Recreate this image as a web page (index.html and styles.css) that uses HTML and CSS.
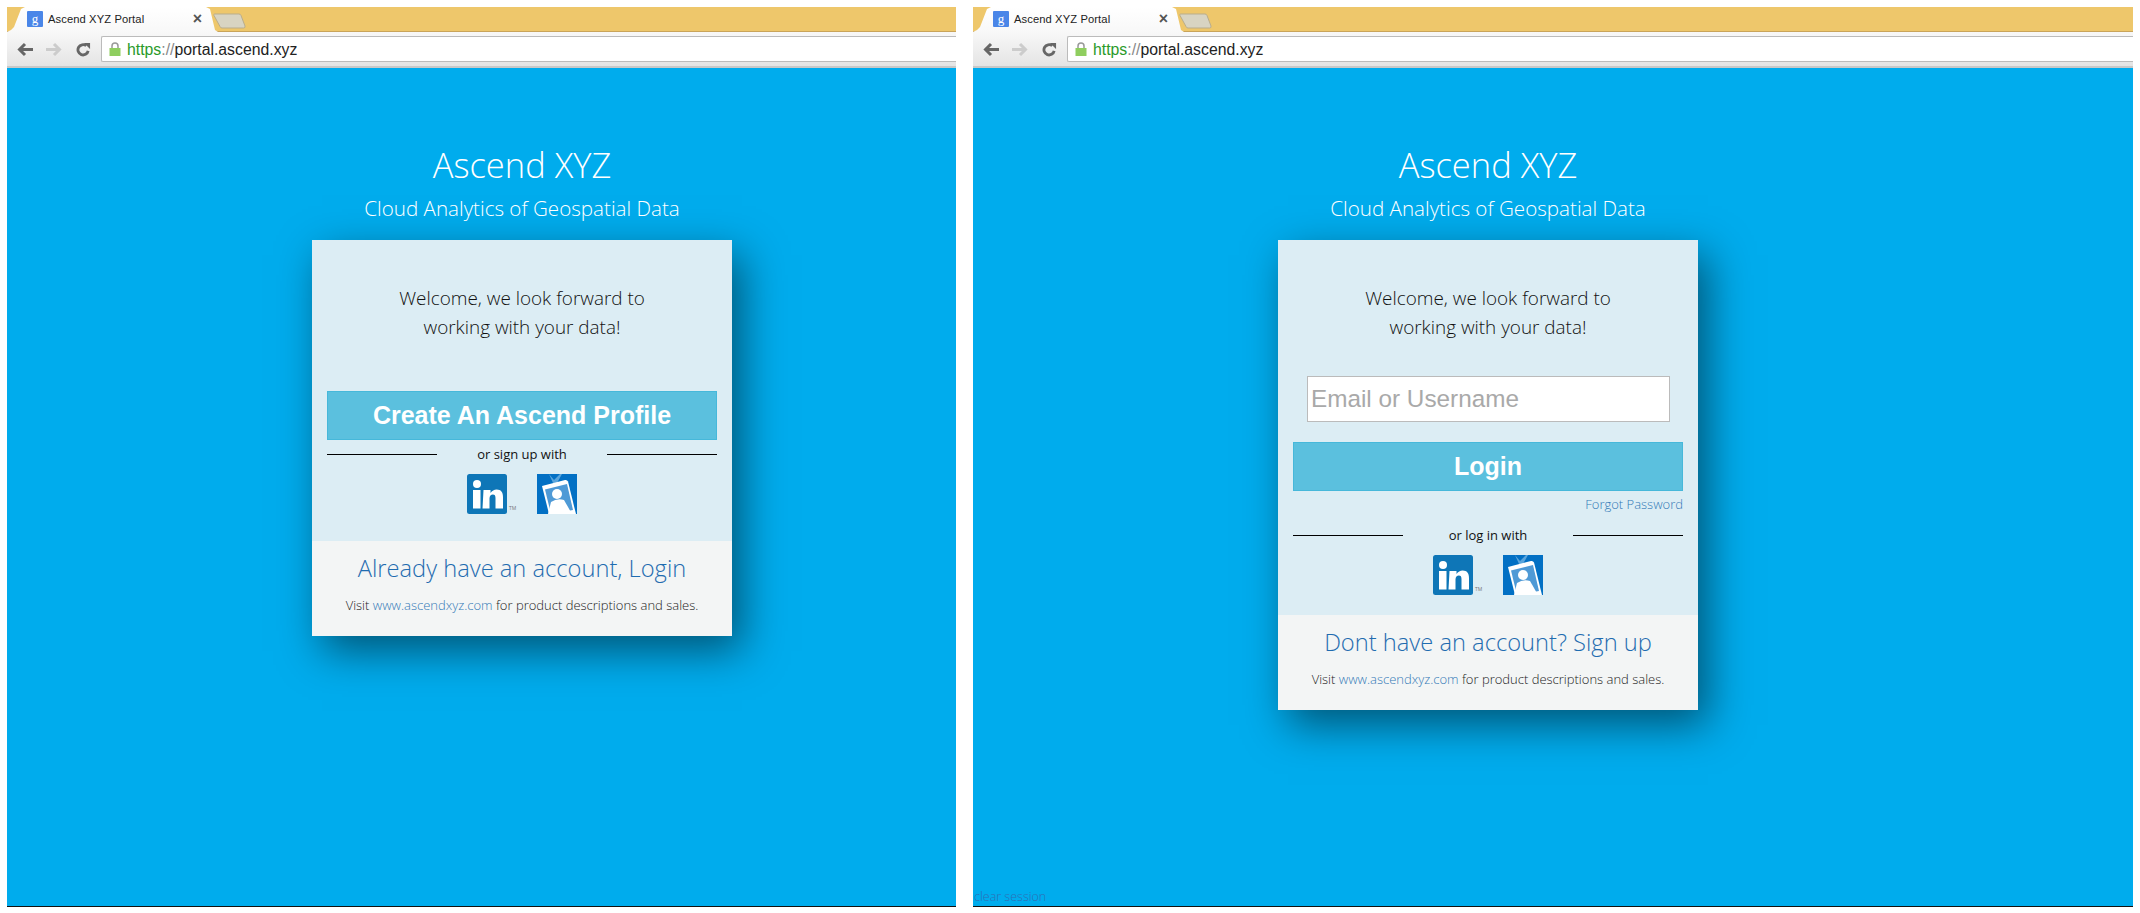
FILE: index.html
```html
<!DOCTYPE html>
<html>
<head>
  <meta charset="utf-8">
  <title>Ascend XYZ Portal</title>
  <link rel="stylesheet" href="styles.css">
</head>
<body>
  <div class="shot">

    <!-- sign up window -->
    <div class="browser browser-left">
      <div class="tabstrip">
        <div class="tab">
          <svg class="favicon" viewBox="0 0 16 16"><rect width="16" height="16" rx="1" fill="#4a86e8"/><text x="8" y="12" text-anchor="middle" class="favicon-g">g</text></svg>
          <span class="tab-title">Ascend XYZ Portal</span>
          <span class="tab-close">×</span>
        </div>
        <svg class="newtab" viewBox="0 0 33 16"><path d="M1.5 1H26q1.5 0 2 1.5L32 13q.5 2-1.5 2H9q-1.5 0-2-1.5L1 2.5Q.5 1 1.5 1z" fill="#d8d4c2" stroke="#b9ad8c"/></svg>
      </div>
      <div class="toolbar">
        <svg class="nav" viewBox="0 0 16 14"><path d="M16 7H3M8 1.5 2.5 7 8 12.5" fill="none" stroke="#666" stroke-width="3"/></svg>
        <svg class="nav" viewBox="0 0 16 14"><path d="M0 7h13M8 1.5 13.5 7 8 12.5" fill="none" stroke="#ccc" stroke-width="3"/></svg>
        <svg class="nav" viewBox="0 0 16 16"><path d="M13.5 9.5A5.5 5.5 0 1 1 11.5 4" fill="none" stroke="#666" stroke-width="3"/><path d="M9 1h6.5v6.5z" fill="#666"/></svg>
        <div class="omnibox">
          <svg class="lock" viewBox="0 0 12 14"><path d="M3 7V4a3 3 0 0 1 6 0v3" fill="none" stroke="#999" stroke-width="1.5"/><rect x=".5" y="6" width="11" height="8" fill="#8fce5f"/></svg>
          <span class="url"><span class="url-scheme">https</span><span class="url-sep">://</span>portal.ascend.xyz</span>
        </div>
      </div>
      <div class="page">
        <div class="brand">
          <h1 class="brand-name">Ascend XYZ</h1>
          <p class="brand-tag">Cloud Analytics of Geospatial Data</p>
        </div>
        <div class="card">
          <div class="card-main">
            <p class="welcome">Welcome, we look forward to<br>working with your data!</p>
            <div class="btn">Create An Ascend Profile</div>
            <div class="divider"><span class="rule"></span><span class="divider-text">or sign up with</span><span class="rule"></span></div>
            <div class="social">
              <div class="linkedin">
                <svg class="social-icon" viewBox="0 0 40 40"><rect width="40" height="40" rx="2.5" fill="#0e76b7"/><circle cx="10" cy="10" r="4" fill="#fff"/><rect x="6" y="16" width="7.5" height="18.5" fill="#fff"/><path d="M16.5 16h7v3c1.5-2.3 3.6-3.5 6.2-3.500 4.3 0 6.3 2.7 6.3 7.5v11.5h-7.5V24c0-2.3-.8-3.4-2.6-3.4-2 0-3.4 1.3-3.4 3.8v10.1h-7z" fill="#fff"/></svg>
                <span class="tm">TM</span>
              </div>
              <svg class="social-icon" viewBox="0 0 40 40"><rect width="40" height="40" fill="#0270c4"/><path d="M12 0l5 6 6-6h2l-5 9h-4z" fill="#5aa5dc"/><path d="M5 12 28 6q2-.5 3 1.5L39 40H12z" fill="#fff"/><path d="M8 15.5 30 10l6 26-22 4z" fill="#4f9ad6"/><circle cx="20" cy="20" r="5" fill="#fff"/><path d="M11 40l3-12q6-4 13-2l8 14z" fill="#fff"/></svg>
            </div>
          </div>
          <div class="card-foot">
            <a class="foot-link">Already have an account, Login</a>
            <p class="foot-note">Visit <a class="site-link">www.ascendxyz.com</a> for product descriptions and sales.</p>
          </div>
        </div>
      </div>
    </div>

    <!-- login window -->
    <div class="browser browser-right">
      <div class="tabstrip">
        <div class="tab">
          <svg class="favicon" viewBox="0 0 16 16"><rect width="16" height="16" rx="1" fill="#4a86e8"/><text x="8" y="12" text-anchor="middle" class="favicon-g">g</text></svg>
          <span class="tab-title">Ascend XYZ Portal</span>
          <span class="tab-close">×</span>
        </div>
        <svg class="newtab" viewBox="0 0 33 16"><path d="M1.5 1H26q1.5 0 2 1.5L32 13q.5 2-1.5 2H9q-1.5 0-2-1.5L1 2.5Q.5 1 1.5 1z" fill="#d8d4c2" stroke="#b9ad8c"/></svg>
      </div>
      <div class="toolbar">
        <svg class="nav" viewBox="0 0 16 14"><path d="M16 7H3M8 1.5 2.5 7 8 12.5" fill="none" stroke="#666" stroke-width="3"/></svg>
        <svg class="nav" viewBox="0 0 16 14"><path d="M0 7h13M8 1.5 13.5 7 8 12.5" fill="none" stroke="#ccc" stroke-width="3"/></svg>
        <svg class="nav" viewBox="0 0 16 16"><path d="M13.5 9.5A5.5 5.5 0 1 1 11.5 4" fill="none" stroke="#666" stroke-width="3"/><path d="M9 1h6.5v6.5z" fill="#666"/></svg>
        <div class="omnibox">
          <svg class="lock" viewBox="0 0 12 14"><path d="M3 7V4a3 3 0 0 1 6 0v3" fill="none" stroke="#999" stroke-width="1.5"/><rect x=".5" y="6" width="11" height="8" fill="#8fce5f"/></svg>
          <span class="url"><span class="url-scheme">https</span><span class="url-sep">://</span>portal.ascend.xyz</span>
        </div>
      </div>
      <div class="page">
        <div class="brand">
          <h1 class="brand-name">Ascend XYZ</h1>
          <p class="brand-tag">Cloud Analytics of Geospatial Data</p>
        </div>
        <div class="card">
          <div class="card-main">
            <p class="welcome welcome-login">Welcome, we look forward to<br>working with your data!</p>
            <div class="email">Email or Username</div>
            <div class="btn btn-login">Login</div>
            <a class="forgot">Forgot Password</a>
            <div class="divider"><span class="rule"></span><span class="divider-text">or log in with</span><span class="rule"></span></div>
            <div class="social social-login">
              <div class="linkedin">
                <svg class="social-icon" viewBox="0 0 40 40"><rect width="40" height="40" rx="2.5" fill="#0e76b7"/><circle cx="10" cy="10" r="4" fill="#fff"/><rect x="6" y="16" width="7.5" height="18.5" fill="#fff"/><path d="M16.5 16h7v3c1.5-2.3 3.6-3.5 6.2-3.500 4.3 0 6.3 2.7 6.3 7.5v11.5h-7.5V24c0-2.3-.8-3.4-2.6-3.4-2 0-3.4 1.3-3.4 3.8v10.1h-7z" fill="#fff"/></svg>
                <span class="tm">TM</span>
              </div>
              <svg class="social-icon" viewBox="0 0 40 40"><rect width="40" height="40" fill="#0270c4"/><path d="M12 0l5 6 6-6h2l-5 9h-4z" fill="#5aa5dc"/><path d="M5 12 28 6q2-.5 3 1.5L39 40H12z" fill="#fff"/><path d="M8 15.5 30 10l6 26-22 4z" fill="#4f9ad6"/><circle cx="20" cy="20" r="5" fill="#fff"/><path d="M11 40l3-12q6-4 13-2l8 14z" fill="#fff"/></svg>
            </div>
          </div>
          <div class="card-foot">
            <a class="foot-link">Dont have an account? Sign up</a>
            <p class="foot-note">Visit <a class="site-link">www.ascendxyz.com</a> for product descriptions and sales.</p>
          </div>
        </div>
        <a class="clear-session">clear session</a>
      </div>
    </div>

  </div>
</body>
</html>
```

FILE: styles.css
```css
* {
  box-sizing: border-box;
}

body {
  margin: 0;
  background: #fff;
  font-family: "Open Sans", "Liberation Sans", sans-serif;
}

.shot {
  display: flex;
  gap: 17px;
  padding: 7px;
  height: 913px;
  overflow: hidden;
}

.browser {
  display: flex;
  flex-direction: column;
  height: 900px;
  border-bottom: 1px solid #111;
}

.browser-left {
  width: 949px;
}

.browser-right {
  width: 1160px;
}

.tabstrip {
  display: flex;
  align-items: flex-end;
  height: 25px;
  background: #eec76b;
  border-bottom: 1px solid #c9a45a;
}

.tab {
  display: flex;
  align-items: center;
  flex-shrink: 0;
  width: 211px;
  height: 25px;
  padding: 0 16px 2px 20px;
  margin-bottom: -1px;
  background: linear-gradient(#fff, #f8f8f8);
  clip-path: polygon(0 100%, 4px 92%, 7px 80%, 14px 8%, 18px 0, 199px 0, 203px 8%, 208px 92%, 100% 100%);
}

.favicon {
  width: 16px;
  height: 16px;
  flex-shrink: 0;
}

.favicon-g {
  font-family: "Liberation Serif", serif;
  font-size: 13px;
  fill: #fff;
}

.tab-title {
  flex-grow: 1;
  margin-left: 5px;
  font-family: "Liberation Sans", sans-serif;
  font-size: 11.2px;
  letter-spacing: .1px;
  color: #222;
}

.tab-close {
  font-family: "Liberation Sans", sans-serif;
  font-size: 16px;
  font-weight: 700;
  color: #555;
}

.newtab {
  width: 33px;
  height: 16px;
  margin: 0 0 2px -5px;
}

.toolbar {
  display: flex;
  align-items: center;
  height: 36px;
  padding-left: 10px;
  background: linear-gradient(#f8f8f8, #e4e4e4);
  border-bottom: 2px solid #c8c8c8;
}

.nav {
  width: 16px;
  height: 15px;
  margin-right: 13px;
}

.omnibox {
  display: flex;
  flex-grow: 1;
  align-items: center;
  height: 26px;
  margin-left: -3px;
  padding-left: 7px;
  background: #fff;
  border: 1px solid #bbb;
  border-right: 0;
  border-radius: 2px 0 0 2px;
}

.lock {
  width: 12px;
  height: 14px;
  margin-right: 6px;
}

.url {
  padding-top: 2px;
  font-family: "Liberation Sans", sans-serif;
  font-size: 15.8px;
  color: #222;
}

.url-scheme {
  color: #2a9a2a;
}

.url-sep {
  color: #888;
}

.page {
  position: relative;
  flex-grow: 1;
  padding: 73px 0 0 305px;
  background: #00aced;
}

.brand {
  width: 420px;
  text-align: center;
  color: #fff;
}

.brand-name {
  margin: 0;
  font-size: 34.5px;
  font-weight: 300;
  line-height: 48px;
}

.brand-tag {
  margin: 1px 0 14px;
  font-size: 20.6px;
  font-weight: 300;
  line-height: 36px;
}

.card {
  width: 420px;
  box-shadow: 10px 15px 40px rgba(0, 0, 0, .5);
}

.card-main {
  padding: 0 15px;
  background: #dcedf4;
}

.welcome {
  margin: 0;
  padding-top: 44px;
  height: 151px;
  font-size: 18.9px;
  font-weight: 300;
  line-height: 28.5px;
  text-align: center;
  color: #111;
}

.welcome-login {
  height: 136px;
}

.btn {
  height: 49px;
  background: #5bc0de;
  border: 1px solid #46b8da;
  font-family: "Liberation Sans", sans-serif;
  font-size: 25px;
  font-weight: 700;
  line-height: 47px;
  color: #fff;
  text-align: center;
}

.btn-login {
  margin-top: 20px;
}

.email {
  width: 363px;
  height: 46px;
  margin-left: 14px;
  padding-left: 3px;
  background: #fff;
  border: 1px solid #bbb;
  font-family: "Liberation Sans", sans-serif;
  font-size: 24.3px;
  line-height: 44px;
  color: #a9a9a9;
}

.forgot {
  display: block;
  margin: 4px 0 8px;
  font-size: 13px;
  font-weight: 300;
  line-height: 18px;
  text-align: right;
  color: #337ab7;
}

.divider {
  display: flex;
  align-items: center;
  height: 28px;
}

.rule {
  width: 110px;
  height: 1px;
  background: #000;
}

.divider-text {
  flex-grow: 1;
  font-size: 13px;
  text-align: center;
  color: #111;
}

.social {
  display: flex;
  justify-content: center;
  gap: 30px;
  padding: 6px 0 27px;
}

.social-login {
  padding-bottom: 20px;
}

.linkedin {
  position: relative;
  display: flex;
}

.social-icon {
  width: 40px;
  height: 40px;
}

.tm {
  position: absolute;
  left: 42px;
  bottom: 3px;
  font-size: 5px;
  color: #777;
}

.card-foot {
  height: 95px;
  padding-top: 10px;
  background: #f3f5f5;
  text-align: center;
}

.foot-link {
  display: block;
  font-size: 23.7px;
  font-weight: 300;
  line-height: 34px;
  color: #1f6cb0;
}

.foot-note {
  margin: 11px 0 0;
  font-size: 13px;
  font-weight: 300;
  color: #222;
}

.site-link {
  color: #337ab7;
}

.clear-session {
  position: absolute;
  left: 1px;
  bottom: 1px;
  font-size: 12.5px;
  font-weight: 300;
  color: #2d6fb5;
}
```
